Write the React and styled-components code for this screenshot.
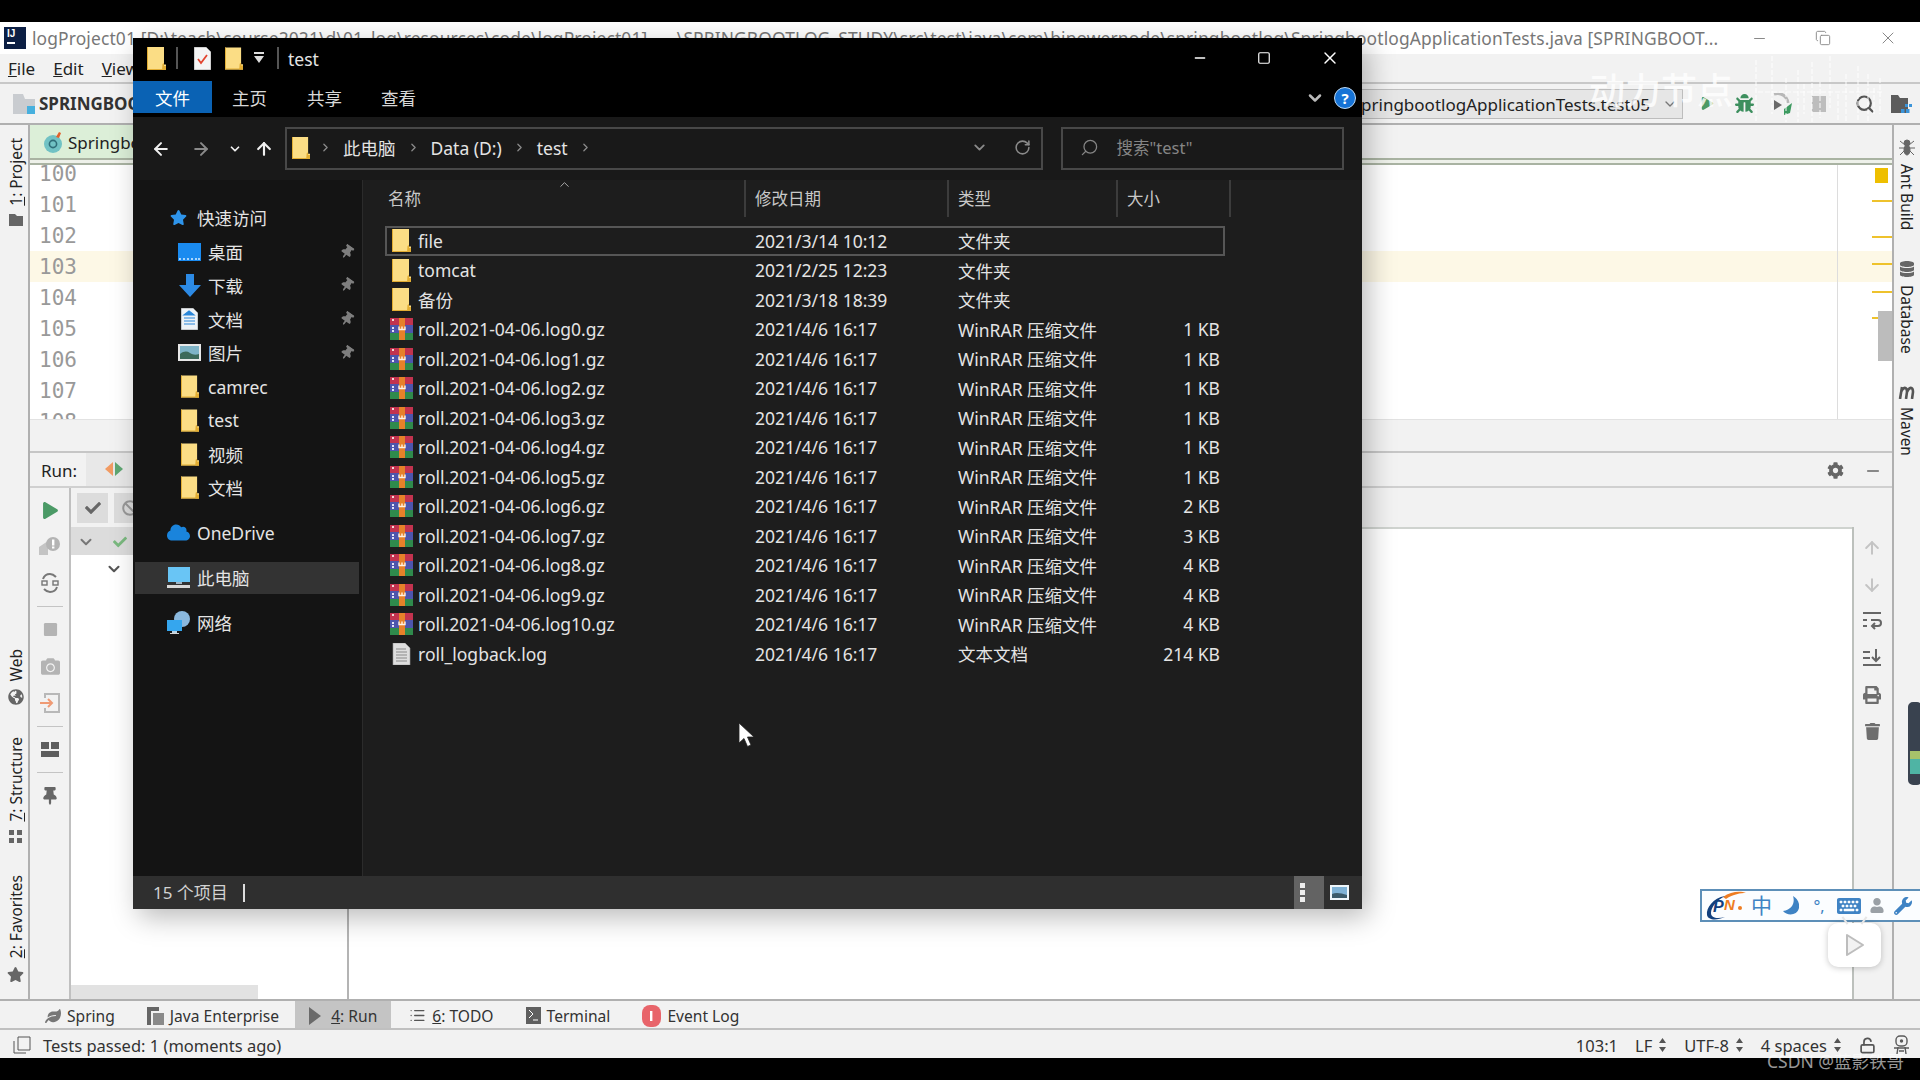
import React from "react";
import styled, { createGlobalStyle } from "styled-components";
import {
  FaBug, FaStar, FaThumbtack, FaCog, FaPrint, FaTrash, FaCamera, FaGlobeAmericas,
  FaPlay, FaLeaf, FaDatabase, FaCheck, FaBan, FaWrench, FaUser, FaKeyboard, FaStop, FaCloud,
} from "react-icons/fa";
import {
  ArrowLeft, ArrowRight, ArrowUp, ArrowDown, ChevronDown, ChevronRight, ChevronUp, RotateCw, X, Minus, Square,
  Search, Copy, List, LockOpen,
} from "lucide-react";

const UI = `"Noto Sans", "Noto Sans CJK SC", sans-serif`;

const Global = createGlobalStyle`
  html, body { margin: 0; padding: 0; background: #000; overflow: hidden; }
  body { font-family: ${UI}; }
  * { box-sizing: border-box; }
`;

//Shell//
const Page = styled.div`
  position: relative;
  width: 1920px;
  height: 1080px;
  padding-top: 22px;
  background: #000;
  overflow: hidden;
`;

const Ide = styled.div`
  display: flex;
  flex-direction: column;
  height: 1036px;
  background: #f2f2f2;
  color: #222;
`;

const TitleBar = styled.div`
  display: flex;
  align-items: center;
  height: 32px;
  padding-left: 4px;
  background: #fff;
  font-size: 17.4px;
  color: #777;
  white-space: nowrap;
`;

const IdeLogo = styled.div`
  flex: none;
  display: flex;
  flex-direction: column;
  width: 22px;
  height: 22px;
  margin-right: 6px;
  padding: 2px 3px;
  background: #0c1f44;
  color: #fff;
  font: bold 10px/10px "Liberation Sans", sans-serif;
  &::after { content: ""; width: 8px; height: 2px; margin-top: 3px; background: #fff; }
`;

const TitleText = styled.span`
  flex: none;
  width: 1690px;
  overflow: hidden;
  letter-spacing: 0.132px;
`;

const WinButtons = styled.div`
  display: flex;
  align-items: center;
  margin-left: 29px;
  color: #888;
  gap: 47px;
`;

const MenuBar = styled.div`
  display: flex;
  align-items: center;
  height: 30px;
  padding-left: 8px;
  gap: 18px;
  border-bottom: 2px solid #c8c8c8;
  font-size: 17px;
`;

const NavBar = styled.div`
  display: flex;
  align-items: center;
  height: 41px;
  padding-left: 13px;
  border-bottom: 2px solid #b0b0b0;
  font-size: 17px;
  white-space: nowrap;
`;

const ProjectName = styled.span`
  margin-left: 4px;
  font-weight: 700;
  color: #333;
`;

const RunCombo = styled.div`
  display: flex;
  align-items: center;
  justify-content: flex-end;
  width: 500px;
  height: 30px;
  margin-left: auto;
  padding: 1px 4px 0 0;
  gap: 12px;
  background: #e6e6e6;
  border: 1px solid #bdbdbd;
  overflow: hidden;
`;

const NavIcons = styled.div`
  display: flex;
  align-items: center;
  margin-left: 6px;
`;

const NavSlot = styled.div`
  display: flex;
  align-items: center;
  justify-content: center;
  width: 37px;
  margin-left: ${(p) => p.$gap || 0}px;
  color: ${(p) => p.$color || "#666"};
`;

const Main = styled.div`
  display: flex;
  height: 874px;
`;

const LeftStripe = styled.div`
  display: flex;
  flex-direction: column;
  align-items: center;
  width: 30px;
  padding: 13px 0 16px 3px;
  border-right: 2px solid #b0b0b0;
`;

const StripeGroup = styled.div`
  display: flex;
  flex-direction: column;
  align-items: center;
  gap: 32px;
  margin-top: ${(p) => (p.$bottom ? "auto" : 0)};
`;

const StripeItem = styled.div`
  display: flex;
  flex-direction: column;
  align-items: center;
  gap: 8px;
  color: #666;
`;

const StripeText = styled.span`
  writing-mode: vertical-rl;
  transform: ${(p) => (p.$right ? "none" : "rotate(180deg)")};
  font-size: 15.5px;
  line-height: 18px;
  color: #222;
  white-space: nowrap;
`;

const RightStripe = styled.div`
  flex: none;
  display: flex;
  flex-direction: column;
  align-items: center;
  width: 28px;
  padding-top: 14px;
  gap: 31px;
  border-left: 2px solid #b0b0b0;
`;

const Center = styled.div`
  flex: 1;
  min-width: 0;
  display: flex;
  flex-direction: column;
`;

//Editor//
const EditorTabs = styled.div`
  display: flex;
  flex-direction: column;
  height: 40px;
`;

const TabRow = styled.div`
  flex: 1;
  display: flex;
`;

const EditorTab = styled.div`
  display: flex;
  align-items: center;
  gap: 4px;
  width: 330px;
  padding: 2px 0 0 14px;
  background: #dcefd8;
  font-size: 17px;
`;

const TabUnderline = styled.div`
  height: 7px;
  background: #eef1ea;
  border-top: 2px solid #a9b3a2;
  border-bottom: 2px solid #a9b3a2;
`;

const Editor = styled.div`
  position: relative;
  height: 254px;
  overflow: hidden;
  background: #fff;
`;

const CodeLine = styled.div`
  height: 31px;
  padding: 1px 0 0 9px;
  background: ${(p) => (p.$current ? "#fdf8e6" : "transparent")};
  font: 21px/31px "DejaVu Sans Mono", monospace;
  color: #999;
  &:first-child { margin-top: -7px; }
`;

const MarginGuide = styled.div`
  position: absolute;
  top: 0;
  bottom: 0;
  left: 1807px;
  width: 1px;
  background: #ddd;
`;

const StripeBox = styled.div`
  position: absolute;
  top: 3px;
  left: 1845px;
  width: 13px;
  height: 15px;
  background: #eebf00;
`;

const StripeMark = styled.div`
  position: absolute;
  top: ${(p) => p.$top}px;
  left: 1842px;
  width: 20px;
  height: 2px;
  background: #eec22c;
`;

const ScrollThumb = styled.div`
  position: absolute;
  top: 146px;
  right: 0;
  width: 14px;
  height: 50px;
  background: #bcbcbc;
`;

const EditorFooter = styled.div`
  height: 34px;
  border-top: 1px solid #e2e2e2;
  border-bottom: 2px solid #c6c6c6;
`;

//Run panel//
const RunHeader = styled.div`
  display: flex;
  align-items: center;
  height: 35px;
  border-bottom: 2px solid #d0d0d0;
  font-size: 17px;
`;

const RunLabel = styled.span`
  width: 56px;
  padding: 2px 0 0 11px;
`;

const RunTab = styled.div`
  display: flex;
  align-items: center;
  align-self: stretch;
  width: 300px;
  padding-left: 19px;
  background: #e8e8e8;
`;

const HeaderTools = styled.div`
  display: flex;
  align-items: center;
  margin-left: auto;
  gap: 20px;
  padding: 2px 10px 0 0;
  color: #666;
`;

const RunBody = styled.div`
  flex: 1;
  min-height: 0;
  display: flex;
`;

const LeftTools = styled.div`
  flex: none;
  display: flex;
  flex-direction: column;
  width: 41px;
  padding: 4px 0 0 1px;
  border-right: 2px solid #c0c0c0;
`;

const ToolSlot = styled.div`
  display: flex;
  align-items: center;
  justify-content: center;
  height: 36.5px;
  color: ${(p) => p.$color || "#b4b4b4"};
`;

const ToolSeparator = styled.div`
  height: 1px;
  margin: 4.5px 6px;
  background: #c4c4c4;
`;

const RunMain = styled.div`
  flex: 1;
  min-width: 0;
  display: flex;
  flex-direction: column;
`;

const RunActions = styled.div`
  display: flex;
  align-items: center;
  height: 39px;
  padding-left: 6px;
  gap: 6px;
`;

const ActionButton = styled.div`
  display: flex;
  align-items: center;
  justify-content: center;
  width: 31px;
  height: 30px;
  background: #dcdcdc;
  color: #666;
`;

const Split = styled.div`
  flex: 1;
  min-height: 0;
  display: flex;
`;

const Tree = styled.div`
  position: relative;
  flex: none;
  width: 278px;
  background: #fff;
  border-right: 2px solid #b4b4b4;
`;

const TreeRow = styled.div`
  display: flex;
  align-items: center;
  height: 28px;
  padding: ${(p) => (p.$selected ? "2px" : "0")} 0 0 ${(p) => p.$indent}px;
  gap: 18px;
  background: ${(p) => (p.$selected ? "#dcdcdc" : "transparent")};
  color: #666;
`;

const HScroll = styled.div`
  position: absolute;
  bottom: 0;
  left: 0;
  width: 187px;
  height: 14px;
  background: #e2e2e2;
`;

const Console = styled.div`
  flex: 1;
  background: #fff;
  border-top: 2px solid #cfd3cf;
`;

const RightTools = styled.div`
  flex: none;
  display: flex;
  flex-direction: column;
  width: 40px;
  padding: 3px 2px 0 0;
  border-left: 2px solid #bcc0bc;
`;

const RightSlot = styled(ToolSlot)`
  height: 36.6px;
  color: ${(p) => p.$color || "#6e6e6e"};
`;

//Bottom bars//
const ToolBar = styled.div`
  display: flex;
  height: 31px;
  padding-left: 29px;
  border-top: 2px solid #b0b0b0;
  border-bottom: 2px solid #c0c0c0;
  font-size: 15.6px;
  color: #333;
`;

const ToolButton = styled.div`
  display: flex;
  align-items: center;
  height: 100%;
  padding: 2px ${(p) => (p.$active ? "14px" : "16px")} 0;
  gap: 6px;
  background: ${(p) => (p.$active ? "#c4c4c4" : "transparent")};
  margin-right: ${(p) => p.$right || 0}px;
  white-space: nowrap;
`;

const StatusBar = styled.div`
  display: flex;
  align-items: center;
  height: 28px;
  padding: 2px 10px 0 13px;
  font-size: 16.5px;
  color: #333;
  white-space: nowrap;
`;

const StatusText = styled.span`
  margin-left: 12px;
`;

const StatusRight = styled.div`
  display: flex;
  align-items: center;
  margin-left: auto;
  gap: 17px;
`;

const StatusCell = styled.span`
  display: inline-flex;
  align-items: center;
  gap: 6px;
`;

const UpDown = styled.span`
  display: inline-flex;
  flex-direction: column;
  color: #555;
  line-height: 0;
`;

//Explorer window//
const Explorer = styled.div`
  position: absolute;
  top: 38px;
  left: 133px;
  display: flex;
  flex-direction: column;
  width: 1229px;
  height: 871px;
  background: #1c1c1c;
  color: #e4e4e4;
  font-size: 17.5px;
  box-shadow: 6px 8px 26px rgba(0, 0, 0, 0.28);
`;

const ExTitle = styled.div`
  display: flex;
  align-items: center;
  height: 40px;
  padding-left: 14px;
  background: #000;
`;

const TitleSep = styled.span`
  width: 2px;
  height: 22px;
  margin: 0 ${(p) => p.$after}px 0 ${(p) => p.$before}px;
  background: #555;
`;

const TitleSpacer = styled.span`
  width: ${(p) => p.$width}px;
`;

const ExTitleText = styled.span`
  padding-top: 2px;
`;

const ExControls = styled.div`
  display: flex;
  align-items: center;
  margin-left: auto;
  padding-right: 22px;
  color: #fff;
  gap: 49px;
`;

const Ribbon = styled.div`
  display: flex;
  align-items: center;
  height: 39px;
  background: #000;
`;

const RibbonFile = styled.div`
  display: flex;
  align-items: center;
  justify-content: center;
  align-self: flex-start;
  width: 79px;
  height: 32px;
  margin-top: 3px;
  background: #0a62b4;
  color: #fff;
`;

const RibbonTab = styled.div`
  margin-left: ${(p) => p.$gap}px;
  color: #d8d8d8;
`;

const HelpDot = styled.div`
  display: flex;
  align-items: center;
  justify-content: center;
  width: 22px;
  height: 22px;
  margin: 0 6px 0 9px;
  border-radius: 50%;
  border: 1.5px solid #bcd9f5;
  background: #1673d6;
  color: #fff;
  font-size: 15px;
  font-weight: 700;
`;

const RibbonRight = styled.div`
  display: flex;
  align-items: center;
  margin-left: auto;
  color: #bbb;
`;

const AddressRow = styled.div`
  display: flex;
  align-items: center;
  height: 63px;
  padding: 0 18px;
  background: #191919;
`;

const NavArrow = styled.span`
  display: flex;
  margin-left: ${(p) => p.$gap || 0}px;
  color: ${(p) => p.$color || "#f0f0f0"};
`;

const AddressBox = styled.div`
  display: flex;
  align-items: center;
  width: 759px;
  height: 43px;
  margin-left: 11px;
  padding: 0 0 2px 5px;
  border: 2px solid #484848;
`;

const Crumb = styled.span`
  margin: 0 11px;
`;

const CrumbArrow = styled.span`
  display: flex;
  margin-left: ${(p) => p.$gap || 0}px;
  color: #8a8a8a;
`;

const SearchBox = styled.div`
  display: flex;
  align-items: center;
  width: 284px;
  height: 43px;
  margin-left: 18px;
  padding: 0 0 3px 17px;
  gap: 18px;
  border: 2px solid #484848;
  color: #858585;
  font-size: 16.5px;
`;

const SearchGlass = styled(Search)`
  transform: scaleX(-1);
`;

const Body = styled.div`
  flex: 1;
  min-height: 0;
  display: flex;
`;

const NavPane = styled.div`
  flex: none;
  width: 230px;
  padding-top: 21px;
  background: #141414;
  border-right: 1px solid #2b2b2b;
`;

const NavItem = styled.div`
  display: flex;
  align-items: center;
  height: ${(p) => p.$height || 33.75}px;
  margin: ${(p) => p.$top || 0}px 3px 0 2px;
  padding: 0 5px 0 ${(p) => (p.$sub ? 43 : 32)}px;
  gap: 7px;
  background: ${(p) => (p.$active ? "#333" : "transparent")};
`;

const NavIcon = styled.span`
  flex: none;
  display: flex;
  justify-content: center;
  align-items: center;
  width: 23px;
`;

const PinMark = styled.span`
  display: flex;
  margin-left: auto;
  color: #7e7e7e;
  transform: rotate(35deg);
`;

const Content = styled.div`
  flex: 1;
  min-width: 0;
  background: #1d1d1d;
`;

const HeaderRow = styled.div`
  position: relative;
  display: grid;
  grid-template-columns: 383px 203px 169px 113px;
  height: 37px;
  margin-bottom: 9px;
`;

const HeaderCell = styled.div`
  display: flex;
  align-items: center;
  padding: 0 0 2px ${(p) => p.$pad || 9}px;
  border-right: 2px solid #3c3c3c;
  color: #c8c8c8;
  font-size: 16.5px;
`;

const SortCaret = styled.span`
  position: absolute;
  top: -3px;
  left: 194px;
  display: flex;
  color: #aaa;
`;

const FileRow = styled.div`
  display: grid;
  grid-template-columns: 361px 203px 169px 107px;
  align-items: center;
  width: 840px;
  height: 29.5px;
  margin-left: 22px;
  box-shadow: ${(p) => (p.$selected ? "inset 0 0 0 2px #565656" : "none")};
`;

const NameCell = styled.div`
  display: flex;
  align-items: center;
  gap: 5px;
  padding-left: 4px;
`;

const IconSlot = styled.span`
  flex: none;
  display: flex;
  justify-content: center;
  width: 24px;
`;

const Cell = styled.div`
  padding-left: 9px;
  white-space: nowrap;
`;

const SizeCell = styled.div`
  padding-right: 5px;
  text-align: right;
`;

const ExStatus = styled.div`
  display: flex;
  align-items: center;
  height: 33px;
  padding-left: 20px;
  background: #2f2f2f;
  color: #d2d2d2;
  font-size: 17px;
`;

const StatusCount = styled.span`
  padding-bottom: 2px;
`;

const Caret = styled.span`
  width: 2px;
  height: 18px;
  margin-left: 15px;
  background: #ddd;
`;

const ViewButtons = styled.div`
  display: flex;
  align-items: center;
  align-self: stretch;
  margin-left: auto;
  padding-right: 13px;
  gap: 6px;
`;

const ViewDetails = styled.div`
  display: flex;
  flex-direction: column;
  align-items: flex-start;
  justify-content: center;
  align-self: stretch;
  width: 30px;
  padding-left: 6px;
  gap: 2px;
  background: #636363;
`;

const ViewDot = styled.span`
  width: 5px;
  height: 5px;
  background: #eee;
`;

//Things lying over the window and the IDE//
const Cursor = styled.svg`
  position: absolute;
  top: 722px;
  left: 738px;
`;

const BrandMark = styled.div`
  position: absolute;
  top: 69px;
  left: 1589px;
  font-size: 36px;
  line-height: 44px;
  font-weight: 500;
  color: rgba(255, 255, 255, 0.82);
  white-space: nowrap;
`;

const Skyline = styled.svg`
  position: absolute;
  top: 54px;
  left: 1750px;
`;

const CsdnMark = styled.div`
  position: absolute;
  top: 1049px;
  left: 1767px;
  font-size: 17.5px;
  line-height: 24px;
  color: rgba(255, 255, 255, 0.6);
  white-space: nowrap;
`;

const ImeBar = styled.div`
  position: absolute;
  top: 889px;
  left: 1700px;
  display: flex;
  align-items: center;
  width: 220px;
  height: 33px;
  padding-left: 3px;
  background: #fbfdff;
  border: 2px solid #5d8fb8;
  border-right: none;
  color: #3f83c4;
`;

const ImeChar = styled.span`
  margin-left: 4px;
  font-size: 21px;
  line-height: 1;
`;

const ImeSlot = styled.span`
  display: flex;
  justify-content: center;
  width: ${(p) => p.$width}px;
  margin-left: ${(p) => p.$gap}px;
  color: ${(p) => p.$color || "#3f83c4"};
`;

const PlayCard = styled.div`
  position: absolute;
  top: 923px;
  left: 1828px;
  display: flex;
  align-items: center;
  justify-content: center;
  width: 53px;
  height: 44px;
  background: #fff;
  border-radius: 10px;
  box-shadow: 0 1px 6px rgba(0, 0, 0, 0.22);
  &::before, &::after {
    content: "";
    position: absolute;
    top: -7px;
    width: 2px;
    height: 9px;
    background: #e6e6e6;
  }
  &::before { left: 16px; transform: rotate(-35deg); }
  &::after { right: 16px; transform: rotate(35deg); }
`;

const EdgePill = styled.div`
  position: absolute;
  top: 702px;
  left: 1908px;
  width: 14px;
  height: 83px;
  border-radius: 5px;
  background: linear-gradient(#39424f 0 60%, #a8c26a 60% 70%, #4fb4a4 70% 88%, #39424f 88%);
  border: 2px solid #3a4350;
`;

//Icons//
const Folder = ({ w = 19, h = 23 }) => (
  <svg width={w} height={h} viewBox="0 0 19 23">
    <path d="M0 0h17v17.5l2 0V23H0z" fill="#fbdd85" />
    <path d="M15.5 17l1.5-1v3H19v4h-4z" fill="#e2ad33" />
    <path d="M0 0h1v23H0zM0 22h19v1H0z" fill="#e2ad33" />
  </svg>
);

const RarIcon = () => (
  <svg width="23" height="22" viewBox="0 0 23 22">
    <rect x="0" y="0" width="23" height="7" fill="#c2334f" />
    <rect x="0" y="7" width="23" height="8" fill="#4d55ad" />
    <rect x="0" y="15" width="23" height="7" fill="#2f8a4c" />
    <rect x="2" y="1" width="2" height="2" fill="#f3d7d7" />
    <rect x="2" y="9" width="2" height="2" fill="#e4e4f6" />
    <rect x="2" y="12" width="2" height="2" fill="#e4e4f6" />
    <rect x="9" y="0" width="6" height="22" fill="#e6812a" />
    <path d="M9 8.5v3h6v-3M12 8.5v3" fill="none" stroke="#fff2e4" strokeWidth="1.4" />
  </svg>
);

const TextFileIcon = () => (
  <svg width="19" height="22" viewBox="0 0 19 22">
    <path d="M1 0h12l5 5v17H1z" fill="#dedede" stroke="#9c9c9c" strokeWidth="0.6" />
    <path d="M4 6h10M4 9h11M4 12h11M4 15h11M4 18h11" stroke="#8a8a8a" strokeWidth="1" />
  </svg>
);

const DesktopIcon = () => (
  <svg width="23" height="18" viewBox="0 0 23 18">
    <rect width="23" height="18" fill="#1a8bf0" />
    <path d="M1 16h2M5 16h2M9 16h2M13 16h2M17 16h2M20 16h2" stroke="#d8eeff" strokeWidth="1.4" />
  </svg>
);

const DownloadIcon = () => (
  <svg width="22" height="23" viewBox="0 0 22 23">
    <path d="M7 0h8v11h7L11 23 0 11h7z" fill="#2c8ae4" />
  </svg>
);

const DocsIcon = () => (
  <svg width="17" height="22" viewBox="0 0 17 22">
    <path d="M0 0h12l5 5v17H0z" fill="#eef2f6" stroke="#8a8a8a" strokeWidth="0.8" />
    <path d="M8 3l5 4H3zM3 10h11M3 13h11M3 16h11" fill="#2a86d8" stroke="#2a86d8" strokeWidth="1.2" />
  </svg>
);

const PictureIcon = () => (
  <svg width="23" height="17" viewBox="0 0 23 17">
    <rect width="23" height="17" fill="#e8e8e8" />
    <rect x="2" y="2" width="19" height="13" fill="#7fb4c7" />
    <path d="M2 15V10c4-3 7-3 10-1s6 2 9 1v5z" fill="#3d6a5a" />
  </svg>
);

const ComputerIcon = () => (
  <svg width="23" height="22" viewBox="0 0 23 22">
    <rect x="1" y="0" width="22" height="15" fill="#69c5f5" />
    <rect x="9" y="15" width="6" height="2" fill="#9fb5c5" />
    <rect x="0" y="18" width="23" height="3" fill="#d9d9d9" />
  </svg>
);

const NetworkIcon = () => (
  <svg width="23" height="24" viewBox="0 0 23 24">
    <circle cx="15" cy="8" r="8" fill="#8ab8de" />
    <rect x="0" y="9" width="15" height="11" fill="#35a6ee" />
    <rect x="5" y="20" width="5" height="2" fill="#b8d4e6" />
    <rect x="3" y="22" width="9" height="1" fill="#d6d6d6" />
  </svg>
);

const ChecklistIcon = () => (
  <svg width="17" height="23" viewBox="0 0 17 23">
    <path d="M0 0h12l5 5v18H0z" fill="#f4f4f4" stroke="#999" strokeWidth="0.8" />
    <path d="M4 12l3 4 6-8" fill="none" stroke="#e2442f" strokeWidth="1.8" />
  </svg>
);

const RerunIcon = () => (
  <svg width="19" height="18" viewBox="0 0 19 18">
    <path d="M8 1v14L0 8z" fill="#f29b63" />
    <path d="M10 1v14l8-7z" fill="#5fa672" />
  </svg>
);

const FailedIcon = () => (
  <svg width="22" height="22" viewBox="0 0 22 22">
    <path d="M0 11l9-6v14L0 19z" fill="#c4c4c4" />
    <circle cx="14" cy="8" r="7" fill="#b4b4b4" />
    <rect x="13" y="3.5" width="2.4" height="6" fill="#fff" />
    <rect x="13" y="10.5" width="2.4" height="2" fill="#fff" />
  </svg>
);

const CycleIcon = () => (
  <svg width="20" height="22" viewBox="0 0 20 22" fill="none" stroke="#777" strokeWidth="2">
    <path d="M3 7c1-3 4-5 7-5 2 0 4 1 6 3M17 15c-1 3-4 5-7 5-2 0-4-1-6-3" />
    <rect x="2" y="9" width="5" height="4" strokeWidth="1.4" />
    <rect x="13" y="9" width="5" height="4" strokeWidth="1.4" />
  </svg>
);

const ImportIcon = () => (
  <svg width="20" height="20" viewBox="0 0 20 20" fill="none">
    <path d="M5 5V1h14v18H5v-4" stroke="#b8b8b8" strokeWidth="2" />
    <path d="M0 10h11M8 6l4 4-4 4" stroke="#ef9a74" strokeWidth="2" />
  </svg>
);

const LayoutIcon = () => (
  <svg width="18" height="15" viewBox="0 0 18 15" fill="#5e5e5e">
    <rect x="0" y="0" width="8" height="7" />
    <rect x="10" y="0" width="8" height="7" />
    <rect x="0" y="9" width="18" height="6" />
  </svg>
);

const WrapIcon = () => (
  <svg width="19" height="20" viewBox="0 0 19 20" fill="none" stroke="#666" strokeWidth="2">
    <path d="M0 2h18M8 9h7c4 0 4 6 0 6H9M12 12l-3 3 3 3M0 15h4M0 9h4" />
  </svg>
);

const ScrollEndIcon = () => (
  <svg width="19" height="18" viewBox="0 0 19 18" fill="none" stroke="#666" strokeWidth="2">
    <path d="M0 3h7M0 9h7M0 16h18M13 0v12M9 8l4 4 4-4" />
  </svg>
);

const ProjectIcon = () => (
  <svg width="21" height="18" viewBox="0 0 21 18">
    <path d="M0 0h7l2 3h8v15H0z" fill="#5c5c5c" />
    <rect x="14" y="9" width="3" height="3" fill="#3b94d9" />
    <rect x="18" y="9" width="3" height="3" fill="#3b94d9" />
    <rect x="10" y="14" width="3.5" height="4" fill="#3b94d9" />
    <rect x="15" y="14" width="3.5" height="4" fill="#3b94d9" />
  </svg>
);

const SmallFolder = () => (
  <svg width="22" height="20" viewBox="0 0 22 20">
    <path d="M0 0h10l2 5h10v15H0z" fill="#c9ccd0" />
    <rect x="14" y="12" width="8" height="8" fill="#47b0de" />
  </svg>
);

const TestClassIcon = () => (
  <svg width="20" height="22" viewBox="0 0 20 22">
    <circle cx="9" cy="12" r="9" fill="#71c2c4" />
    <circle cx="9" cy="12" r="3.6" fill="none" stroke="#2f6d78" strokeWidth="1.6" />
    <path d="M12 5l3-5 2 1-2 5z" fill="#e2602c" />
  </svg>
);

const CoverageIcon = () => (
  <svg width="23" height="22" viewBox="0 0 23 22">
    <path d="M4 1c7-2 13 2 14 9" fill="none" stroke="#b8b8b8" strokeWidth="3" />
    <path d="M4 7l8 5-8 5z" fill="#6a6a6a" />
    <path d="M14 16l8-6-2 10-6 2z" fill="#3c9a60" />
  </svg>
);

const StopIcon = () => (
  <svg width="14" height="16" viewBox="0 0 14 16">
    <rect width="14" height="16" fill="#bdbdbd" />
  </svg>
);

const MoonIcon = () => (
  <svg width="16" height="20" viewBox="0 0 16 20" fill="currentColor">
    <path d="M10 0c2 6 0 13-10 15 4 5 14 5 16-3 1-5-2-10-6-12z" />
  </svg>
);

const UpDownMark = () => (
  <UpDown>
    <svg width="9" height="14" viewBox="0 0 9 14" fill="currentColor">
      <path d="M4.5 0L8 5H1zM4.5 14L1 9h7z" />
    </svg>
  </UpDown>
);

const HectorIcon = () => (
  <svg width="17" height="20" viewBox="0 0 17 20" fill="none" stroke="#5a5a5a" strokeWidth="1.4">
    <rect x="3" y="1" width="11" height="10" rx="4" />
    <circle cx="8.5" cy="6" r="1" fill="#5a5a5a" />
    <path d="M1 13h15M5 12l-1 7M12 12l1 7M6 16h5" />
  </svg>
);

const PnLogo = () => (
  <svg width="42" height="30" viewBox="0 0 42 30">
    <path d="M18 6C26 0 36 0 41 2c-5 0-13 1-20 6z" fill="#ee7d22" />
    <path d="M20 5C8 7 1 17 2 24c1 5 9 6 18 2-8 2-14 1-14-4 0-6 6-13 14-17z" fill="#12407e" />
    <text x="8" y="21" fontFamily="Liberation Sans" fontStyle="italic" fontWeight="700" fontSize="16" fill="#12407e">P</text>
    <text x="19" y="19" fontFamily="Liberation Sans" fontStyle="italic" fontWeight="700" fontSize="15" fill="#ee7d22">N</text>
    <circle cx="35" cy="17" r="2" fill="#ee7d22" />
  </svg>
);

//Data//
const lineNumbers = [100, 101, 102, 103, 104, 105, 106, 107, 108];
const stripeMarks = [35, 71, 98, 126, 152];

const archiveSizes = [1, 1, 1, 1, 1, 1, 2, 3, 4, 4, 4];

const files = [
  { name: "file", date: "2021/3/14 10:12", type: "文件夹", kind: "folder", selected: true },
  { name: "tomcat", date: "2021/2/25 12:23", type: "文件夹", kind: "folder" },
  { name: "备份", date: "2021/3/18 18:39", type: "文件夹", kind: "folder" },
  ...archiveSizes.map((size, i) => ({
    name: `roll.2021-04-06.log${i}.gz`,
    date: "2021/4/6 16:17",
    type: "WinRAR 压缩文件",
    size: `${size} KB`,
    kind: "rar",
  })),
  { name: "roll_logback.log", date: "2021/4/6 16:17", type: "文本文档", size: "214 KB", kind: "text" },
];

const fileIcons = { folder: <Folder />, rar: <RarIcon />, text: <TextFileIcon /> };

const quickAccess = [
  { label: "桌面", icon: <DesktopIcon />, pinned: true },
  { label: "下载", icon: <DownloadIcon />, pinned: true },
  { label: "文档", icon: <DocsIcon />, pinned: true },
  { label: "图片", icon: <PictureIcon />, pinned: true },
  { label: "camrec", icon: <Folder w={18} h={23} /> },
  { label: "test", icon: <Folder w={18} h={23} /> },
  { label: "视频", icon: <Folder w={18} h={23} /> },
  { label: "文档", icon: <Folder w={18} h={23} /> },
];

const skylinePaths = [
  "M6 6v62", "M22 2v58", "M8 38H132", "M36 24v44", "M48 16v54", "M54 30v30", "M62 8v60", "M70 28v36",
  "M80 2v52", "M88 40v40", "M96 20v50", "M108 12v58", "M118 20v48", "M124 34v26", "M130 24v36",
];

const TITLE =
  "logProject01 [D:\\teach\\course2021\\d\\01_log\\resources\\code\\logProject01] - ...\\SPRINGBOOTLOG_STUDY\\src\\test\\java\\com\\bjpowernode\\springbootlog\\SpringbootlogApplicationTests.java [SPRINGBOOT...";

function App() {
  return (
    <Page>
      <Global />
      <Ide>
        <TitleBar>
          <IdeLogo>IJ</IdeLogo>
          <TitleText>{TITLE}</TitleText>
          <WinButtons>
            <Minus size={17} strokeWidth={1.4} />
            <Copy size={16} strokeWidth={1.4} />
            <X size={20} strokeWidth={1.2} />
          </WinButtons>
        </TitleBar>
        <MenuBar>
          <span><u>F</u>ile</span>
          <span><u>E</u>dit</span>
          <span><u>V</u>iew</span>
        </MenuBar>
        <NavBar>
          <SmallFolder />
          <ProjectName>SPRINGBOOTLOG_STUDY</ProjectName>
          <RunCombo>
            <span>SpringbootlogApplicationTests.test05</span>
            <ChevronDown size={16} color="#777" />
          </RunCombo>
          <NavIcons>
            <NavSlot $color="#4a9a66"><FaPlay size={13} /></NavSlot>
            <NavSlot $color="#3d8f5e"><FaBug size={19} /></NavSlot>
            <NavSlot><CoverageIcon /></NavSlot>
            <NavSlot><StopIcon /></NavSlot>
            <NavSlot $gap={9} $color="#555"><Search size={20} strokeWidth={2.6} /></NavSlot>
            <NavSlot><ProjectIcon /></NavSlot>
          </NavIcons>
        </NavBar>
        <Main>
          <LeftStripe>
            <StripeGroup>
              <StripeItem>
                <StripeText><u>1</u>: Project</StripeText>
                <svg width="14" height="12" viewBox="0 0 14 12" fill="#666"><path d="M0 0h6l2 2h6v10H0z" /></svg>
              </StripeItem>
            </StripeGroup>
            <StripeGroup $bottom>
              <StripeItem>
                <StripeText>Web</StripeText>
                <FaGlobeAmericas size={16} />
              </StripeItem>
              <StripeItem>
                <StripeText><u>7</u>: Structure</StripeText>
                <svg width="13" height="13" viewBox="0 0 13 13" fill="#666"><path d="M0 0h5v5H0zM8 0h5v5H8zM0 8h5v5H0zM8 8h5v5H8z" /></svg>
              </StripeItem>
              <StripeItem>
                <StripeText><u>2</u>: Favorites</StripeText>
                <FaStar size={17} />
              </StripeItem>
            </StripeGroup>
          </LeftStripe>
          <Center>
            <EditorTabs>
              <TabRow>
                <EditorTab>
                  <TestClassIcon />
                  <span>SpringbootlogApplicationTests.java</span>
                </EditorTab>
              </TabRow>
              <TabUnderline />
            </EditorTabs>
            <Editor>
              {lineNumbers.map((n) => (
                <CodeLine key={n} $current={n === 103}>{n}</CodeLine>
              ))}
              <MarginGuide />
              <StripeBox />
              {stripeMarks.map((top) => (
                <StripeMark key={top} $top={top} />
              ))}
              <ScrollThumb />
            </Editor>
            <EditorFooter />
            <RunHeader>
              <RunLabel>Run:</RunLabel>
              <RunTab><RerunIcon /></RunTab>
              <HeaderTools>
                <FaCog size={17} />
                <Minus size={18} strokeWidth={2.2} />
              </HeaderTools>
            </RunHeader>
            <RunBody>
              <LeftTools>
                <ToolSlot $color="#4b9a66"><FaPlay size={17} /></ToolSlot>
                <ToolSlot><FailedIcon /></ToolSlot>
                <ToolSlot><CycleIcon /></ToolSlot>
                <ToolSeparator />
                <ToolSlot><FaStop size={15} /></ToolSlot>
                <ToolSlot><FaCamera size={19} /></ToolSlot>
                <ToolSlot><ImportIcon /></ToolSlot>
                <ToolSeparator />
                <ToolSlot><LayoutIcon /></ToolSlot>
                <ToolSeparator />
                <ToolSlot $color="#666"><FaThumbtack size={18} /></ToolSlot>
              </LeftTools>
              <RunMain>
                <RunActions>
                  <ActionButton><FaCheck size={16} /></ActionButton>
                  <ActionButton><FaBan size={16} color="#999" /></ActionButton>
                </RunActions>
                <Split>
                  <Tree>
                    <TreeRow $selected $indent={6}>
                      <ChevronDown size={18} color="#777" strokeWidth={2.6} />
                      <FaCheck size={14} color="#7ab97f" />
                    </TreeRow>
                    <TreeRow $indent={34}>
                      <ChevronDown size={18} color="#555" strokeWidth={2.8} />
                    </TreeRow>
                    <HScroll />
                  </Tree>
                  <Console />
                  <RightTools>
                    <RightSlot $color="#c4c4c4"><ArrowUp size={20} strokeWidth={2.4} /></RightSlot>
                    <RightSlot $color="#c4c4c4"><ArrowDown size={20} strokeWidth={2.4} /></RightSlot>
                    <RightSlot><WrapIcon /></RightSlot>
                    <RightSlot><ScrollEndIcon /></RightSlot>
                    <RightSlot><FaPrint size={18} /></RightSlot>
                    <RightSlot><FaTrash size={17} /></RightSlot>
                  </RightTools>
                </Split>
              </RunMain>
            </RunBody>
          </Center>
          <RightStripe>
            <StripeItem>
              <svg width="16" height="17" viewBox="0 0 16 17" fill="#666" stroke="#666">
                <ellipse cx="8" cy="4" rx="3" ry="3" /><ellipse cx="8" cy="11" rx="3" ry="5" />
                <path d="M1 2l5 4M15 2l-5 4M0 9h16M1 16l5-5M15 16l-5-5" fill="none" />
              </svg>
              <StripeText $right>Ant Build</StripeText>
            </StripeItem>
            <StripeItem>
              <FaDatabase size={16} />
              <StripeText $right>Database</StripeText>
            </StripeItem>
            <StripeItem>
              <svg width="18" height="14" viewBox="0 0 18 14" fill="none" stroke="#555" strokeWidth="2.6">
                <path d="M2 14l2-12M3 7c2-5 6-6 6 0l-1 7M9 7c2-5 6-6 6 0l-1 7" />
              </svg>
              <StripeText $right>Maven</StripeText>
            </StripeItem>
          </RightStripe>
        </Main>
        <ToolBar>
          <ToolButton>
            <FaLeaf size={16} color="#777" />
            <span>Spring</span>
          </ToolButton>
          <ToolButton>
            <svg width="17" height="18" viewBox="0 0 17 18">
              <path d="M0 0h12v4H4v14H0z" fill="#666" /><rect x="6" y="6" width="11" height="12" fill="#8a8a8a" />
            </svg>
            <span>Java Enterprise</span>
          </ToolButton>
          <ToolButton $active $right={2}>
            <svg width="12" height="18" viewBox="0 0 12 18" fill="#6a6a6a"><path d="M0 0l12 9-12 9z" /></svg>
            <span>&nbsp;<u>4</u>: Run</span>
          </ToolButton>
          <ToolButton>
            <List size={17} color="#555" strokeWidth={1.8} />
            <span><u>6</u>: TODO</span>
          </ToolButton>
          <ToolButton>
            <svg width="15" height="17" viewBox="0 0 15 17"><rect width="15" height="17" fill="#5f5f5f" /><path d="M3 3l4 4-4 4M7 13h5" stroke="#fff" fill="none" /></svg>
            <span>Terminal</span>
          </ToolButton>
          <ToolButton>
            <svg width="19" height="22" viewBox="0 0 19 22">
              <rect width="19" height="22" rx="8" fill="#e8646a" />
              <rect x="8" y="6" width="2.4" height="10" fill="#fff" />
            </svg>
            <span>Event Log</span>
          </ToolButton>
        </ToolBar>
        <StatusBar>
          <svg width="18" height="18" viewBox="0 0 18 18" fill="none" stroke="#555">
            <path d="M5 1h12v13H5zM1 5v12h12" />
          </svg>
          <StatusText>Tests passed: 1 (moments ago)</StatusText>
          <StatusRight>
            <StatusCell>103:1</StatusCell>
            <StatusCell>LF <UpDownMark /></StatusCell>
            <StatusCell>UTF-8 <UpDownMark /></StatusCell>
            <StatusCell>4 spaces <UpDownMark /></StatusCell>
            <LockOpen size={17} color="#555" strokeWidth={2.4} />
            <HectorIcon />
          </StatusRight>
        </StatusBar>
      </Ide>

      <Explorer>
        <ExTitle>
          <Folder w={19} h={23} />
          <TitleSep $before={10} $after={16} />
          <ChecklistIcon />
          <TitleSpacer $width={14} />
          <Folder w={18} h={23} />
          <TitleSpacer $width={11} />
          <svg width="10" height="12" viewBox="0 0 10 12" fill="#ddd"><path d="M0 0h10v2H0zM0 4h10L5 11z" /></svg>
          <TitleSep $before={13} $after={9} />
          <ExTitleText>test</ExTitleText>
          <ExControls>
            <Minus size={16} strokeWidth={2} />
            <Square size={14} strokeWidth={2} />
            <X size={20} strokeWidth={1.7} />
          </ExControls>
        </ExTitle>
        <Ribbon>
          <RibbonFile>文件</RibbonFile>
          <RibbonTab $gap={20}>主页</RibbonTab>
          <RibbonTab $gap={40}>共享</RibbonTab>
          <RibbonTab $gap={39}>查看</RibbonTab>
          <RibbonRight>
            <ChevronDown size={20} strokeWidth={3} />
            <HelpDot>?</HelpDot>
          </RibbonRight>
        </Ribbon>
        <AddressRow>
          <NavArrow><ArrowLeft size={20} strokeWidth={2.4} /></NavArrow>
          <NavArrow $gap={20} $color="#8a8a8a"><ArrowRight size={20} strokeWidth={2.4} /></NavArrow>
          <NavArrow $gap={17}><ChevronDown size={14} strokeWidth={3} /></NavArrow>
          <NavArrow $gap={12}><ArrowUp size={20} strokeWidth={2.6} /></NavArrow>
          <AddressBox>
            <Folder w={18} h={22} />
            <CrumbArrow $gap={9}><ChevronRight size={13} strokeWidth={2.4} /></CrumbArrow>
            <Crumb>此电脑</Crumb>
            <CrumbArrow><ChevronRight size={13} strokeWidth={2.4} /></CrumbArrow>
            <Crumb>Data (D:)</Crumb>
            <CrumbArrow><ChevronRight size={13} strokeWidth={2.4} /></CrumbArrow>
            <Crumb>test</Crumb>
            <CrumbArrow><ChevronRight size={13} strokeWidth={2.4} /></CrumbArrow>
            <CrumbArrow $gap={379}><ChevronDown size={17} strokeWidth={2.6} /></CrumbArrow>
            <CrumbArrow $gap={26}><RotateCw size={17} strokeWidth={2.2} /></CrumbArrow>
          </AddressBox>
          <SearchBox>
            <SearchGlass size={19} strokeWidth={1.6} />
            <span>搜索"test"</span>
          </SearchBox>
        </AddressRow>
        <Body>
          <NavPane>
            <NavItem>
              <NavIcon><FaStar size={17} color="#2e94ea" /></NavIcon>
              <span>快速访问</span>
            </NavItem>
            {quickAccess.map((item, i) => (
              <NavItem key={i} $sub>
                <NavIcon>{item.icon}</NavIcon>
                <span>{item.label}</span>
                {item.pinned && <PinMark><FaThumbtack size={14} /></PinMark>}
              </NavItem>
            ))}
            <NavItem $top={11}>
              <NavIcon><FaCloud size={23} color="#1a84dc" /></NavIcon>
              <span>OneDrive</span>
            </NavItem>
            <NavItem $top={12} $height={32} $active>
              <NavIcon><ComputerIcon /></NavIcon>
              <span>此电脑</span>
            </NavItem>
            <NavItem $top={12} $height={34}>
              <NavIcon><NetworkIcon /></NavIcon>
              <span>网络</span>
            </NavItem>
          </NavPane>
          <Content>
            <HeaderRow>
              <HeaderCell $pad={25}>名称</HeaderCell>
              <HeaderCell>修改日期</HeaderCell>
              <HeaderCell>类型</HeaderCell>
              <HeaderCell>大小</HeaderCell>
              <SortCaret><ChevronUp size={15} strokeWidth={1.6} /></SortCaret>
            </HeaderRow>
            {files.map((file) => (
              <FileRow key={file.name} $selected={file.selected}>
                <NameCell>
                  <IconSlot>{fileIcons[file.kind]}</IconSlot>
                  <span>{file.name}</span>
                </NameCell>
                <Cell>{file.date}</Cell>
                <Cell>{file.type}</Cell>
                <SizeCell>{file.size}</SizeCell>
              </FileRow>
            ))}
          </Content>
        </Body>
        <ExStatus>
          <StatusCount>15 个项目</StatusCount>
          <Caret />
          <ViewButtons>
            <ViewDetails>
              <ViewDot /><ViewDot /><ViewDot />
            </ViewDetails>
            <svg width="19" height="15" viewBox="0 0 19 15">
              <rect width="19" height="15" fill="#eef6fb" />
              <rect x="2" y="2" width="15" height="11" fill="#7fb2d6" />
              <path d="M2 13V9c4-2 9-1 15 1v3z" fill="#3b5a6a" />
            </svg>
          </ViewButtons>
        </ExStatus>
      </Explorer>

      <Cursor width="18" height="26" viewBox="0 0 18 26">
        <path d="M1 1v20l5-4.5 3.5 8 3.5-1.5-3.5-8H16z" fill="#fff" stroke="#222" strokeWidth="0.8" />
      </Cursor>

      <BrandMark>动力节点</BrandMark>
      <Skyline width="136" height="68" viewBox="0 0 136 68" fill="none" stroke="#fff" strokeOpacity="0.8" strokeWidth="1.2" strokeDasharray="5 2">
        {skylinePaths.map((d) => (
          <path key={d} d={d} />
        ))}
      </Skyline>

      <EdgePill />

      <ImeBar>
        <PnLogo />
        <ImeChar>中</ImeChar>
        <ImeSlot $width={18} $gap={10}><MoonIcon /></ImeSlot>
        <ImeSlot $width={14} $gap={12}>°,</ImeSlot>
        <ImeSlot $width={24} $gap={11}><FaKeyboard size={24} /></ImeSlot>
        <ImeSlot $width={14} $gap={9} $color="#9aa0a6"><FaUser size={15} /></ImeSlot>
        <ImeSlot $width={20} $gap={9}><FaWrench size={18} /></ImeSlot>
      </ImeBar>

      <PlayCard>
        <svg width="20" height="24" viewBox="0 0 20 24" fill="#f2f2f2" stroke="#bdbdbd" strokeWidth="2">
          <path d="M2 2l16 10L2 22z" strokeLinejoin="round" />
        </svg>
      </PlayCard>

      <CsdnMark>CSDN @蓝影铁哥</CsdnMark>
    </Page>
  );
}

export default App;
